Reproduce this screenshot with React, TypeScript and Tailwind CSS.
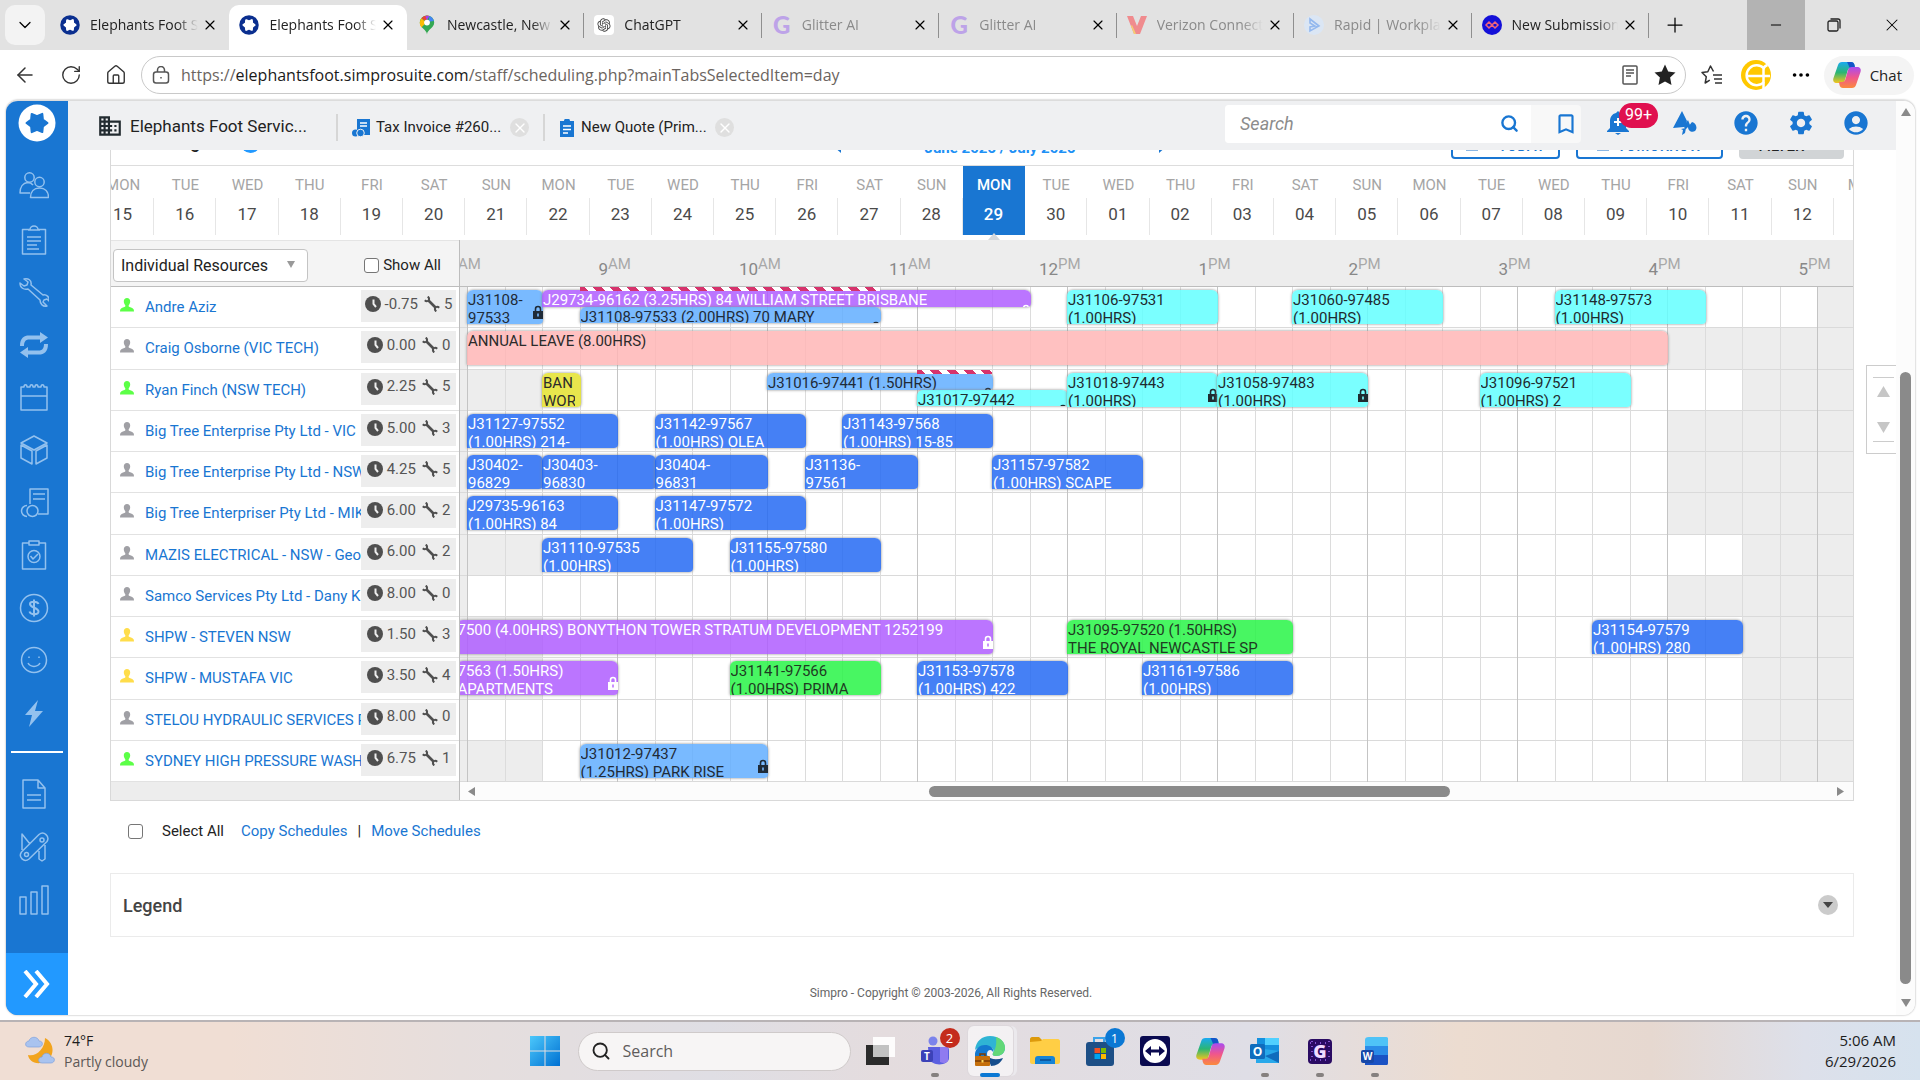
import React from 'react';
import clsx from 'clsx';
import { ArrowLeft, ChevronDown, House, Minus, MoreHorizontal, Plus, RotateCw, Search, X } from 'lucide-react';
import { MdAccountCircle, MdBookmarkBorder, MdBusiness, MdHelp, MdSettings } from 'react-icons/md';
import { RiOpenaiFill } from 'react-icons/ri';

const HOUR_WIDTH = 150;
const DAY_START = 8;

const timeToX = (hour: number) => 7 + (hour - DAY_START) * HOUR_WIDTH;

type Tone = 'sky' | 'purple' | 'cyan' | 'pink' | 'yellow' | 'blue' | 'green';

interface Job {
  start: number;
  end: number;
  tone: Tone;
  lines: string[];
  locked?: boolean;
  slot?: 'top' | 'bottom';
}

interface Resource {
  name: string;
  status: 'green' | 'grey' | 'yellow';
  hours: string;
  jobs: string;
  from: number;
  to: number;
  clash?: [number, number];
  blocks: Job[];
}

const tones: Record<Tone, string> = {
  sky: 'bg-[#62aeff]/85 text-[#1f2b38]',
  purple: 'bg-[#af5dff]/85 text-white',
  cyan: 'bg-[#62ffff]/85 text-[#1f2b30]',
  pink: 'bg-[#ffb6b6]/85 text-[#2b2b2b]',
  yellow: 'bg-[#e4e22e]/85 text-[#2b2b2b]',
  blue: 'bg-[#256af3]/85 text-white',
  green: 'bg-[#28f446]/85 text-[#1f3b22]',
};

const statusColors = {
  green: 'text-[#5cff47]',
  grey: 'text-[#a0a0a5]',
  yellow: 'text-[#ffdd4a]',
};

const resources: Resource[] = [
  {
    name: 'Andre Aziz', status: 'green', hours: '-0.75', jobs: '5', from: 8, to: 17, clash: [8.75, 10.75],
    blocks: [
      { start: 8, end: 8.5, tone: 'sky', lines: ['J31108-', '97533'], locked: true },
      { start: 8.5, end: 11.75, tone: 'purple', lines: ['J29734-96162 (3.25HRS) 84 WILLIAM STREET BRISBANE'], slot: 'top', locked: true },
      { start: 8.75, end: 10.75, tone: 'sky', lines: ['J31108-97533 (2.00HRS) 70 MARY'], slot: 'bottom', locked: true },
      { start: 12, end: 13, tone: 'cyan', lines: ['J31106-97531', '(1.00HRS)'] },
      { start: 13.5, end: 14.5, tone: 'cyan', lines: ['J31060-97485', '(1.00HRS)'] },
      { start: 15.25, end: 16.25, tone: 'cyan', lines: ['J31148-97573', '(1.00HRS)'] },
    ],
  },
  {
    name: 'Craig Osborne (VIC TECH)', status: 'grey', hours: '0.00', jobs: '0', from: 8, to: 16,
    blocks: [{ start: 8, end: 16, tone: 'pink', lines: ['ANNUAL LEAVE (8.00HRS)'] }],
  },
  {
    name: 'Ryan Finch (NSW TECH)', status: 'green', hours: '2.25', jobs: '5', from: 8.5, to: 16.5, clash: [11, 11.5],
    blocks: [
      { start: 8.5, end: 8.75, tone: 'yellow', lines: ['BAN', 'WOR'] },
      { start: 10, end: 11.5, tone: 'sky', lines: ['J31016-97441 (1.50HRS)'], slot: 'top', locked: true },
      { start: 11, end: 12, tone: 'cyan', lines: ['J31017-97442'], slot: 'bottom', locked: true },
      { start: 12, end: 13, tone: 'cyan', lines: ['J31018-97443', '(1.00HRS)'], locked: true },
      { start: 13, end: 14, tone: 'cyan', lines: ['J31058-97483', '(1.00HRS)'], locked: true },
      { start: 14.75, end: 15.75, tone: 'cyan', lines: ['J31096-97521', '(1.00HRS) 2'] },
    ],
  },
  {
    name: 'Big Tree Enterprise Pty Ltd - VIC', status: 'grey', hours: '5.00', jobs: '3', from: 8, to: 16,
    blocks: [
      { start: 8, end: 9, tone: 'blue', lines: ['J31127-97552', '(1.00HRS) 214-'] },
      { start: 9.25, end: 10.25, tone: 'blue', lines: ['J31142-97567', '(1.00HRS) OLEA'] },
      { start: 10.5, end: 11.5, tone: 'blue', lines: ['J31143-97568', '(1.00HRS) 15-85'] },
    ],
  },
  {
    name: 'Big Tree Enterprise Pty Ltd - NSW', status: 'grey', hours: '4.25', jobs: '5', from: 8, to: 16,
    blocks: [
      { start: 8, end: 8.5, tone: 'blue', lines: ['J30402-', '96829'] },
      { start: 8.5, end: 9.25, tone: 'blue', lines: ['J30403-', '96830'] },
      { start: 9.25, end: 10, tone: 'blue', lines: ['J30404-', '96831'] },
      { start: 10.25, end: 11, tone: 'blue', lines: ['J31136-', '97561'] },
      { start: 11.5, end: 12.5, tone: 'blue', lines: ['J31157-97582', '(1.00HRS) SCAPE'] },
    ],
  },
  {
    name: 'Big Tree Enterpriser Pty Ltd - MIK', status: 'grey', hours: '6.00', jobs: '2', from: 8, to: 16,
    blocks: [
      { start: 8, end: 9, tone: 'blue', lines: ['J29735-96163', '(1.00HRS) 84'] },
      { start: 9.25, end: 10.25, tone: 'blue', lines: ['J31147-97572', '(1.00HRS)'] },
    ],
  },
  {
    name: 'MAZIS ELECTRICAL - NSW - Geo', status: 'grey', hours: '6.00', jobs: '2', from: 8.5, to: 16.5,
    blocks: [
      { start: 8.5, end: 9.5, tone: 'blue', lines: ['J31110-97535', '(1.00HRS)'] },
      { start: 9.75, end: 10.75, tone: 'blue', lines: ['J31155-97580', '(1.00HRS)'] },
    ],
  },
  { name: 'Samco Services Pty Ltd - Dany K', status: 'grey', hours: '8.00', jobs: '0', from: 8, to: 16, blocks: [] },
  {
    name: 'SHPW - STEVEN NSW', status: 'yellow', hours: '1.50', jobs: '3', from: 8.5, to: 16.5,
    blocks: [
      { start: 7.93, end: 11.5, tone: 'purple', lines: ['7500 (4.00HRS) BONYTHON TOWER STRATUM DEVELOPMENT 1252199'], locked: true },
      { start: 12, end: 13.5, tone: 'green', lines: ['J31095-97520 (1.50HRS)', 'THE ROYAL NEWCASTLE SP'] },
      { start: 15.5, end: 16.5, tone: 'blue', lines: ['J31154-97579', '(1.00HRS) 280'] },
    ],
  },
  {
    name: 'SHPW - MUSTAFA VIC', status: 'yellow', hours: '3.50', jobs: '4', from: 8.5, to: 16.5,
    blocks: [
      { start: 7.93, end: 9, tone: 'purple', lines: ['7563 (1.50HRS)', 'APARTMENTS'], locked: true },
      { start: 9.75, end: 10.75, tone: 'green', lines: ['J31141-97566', '(1.00HRS) PRIMA'] },
      { start: 11, end: 12, tone: 'blue', lines: ['J31153-97578', '(1.00HRS) 422'] },
      { start: 12.5, end: 13.5, tone: 'blue', lines: ['J31161-97586', '(1.00HRS)'] },
    ],
  },
  { name: 'STELOU HYDRAULIC SERVICES P', status: 'grey', hours: '8.00', jobs: '0', from: 8, to: 16.5, blocks: [] },
  {
    name: 'SYDNEY HIGH PRESSURE WASH', status: 'green', hours: '6.75', jobs: '1', from: 8.5, to: 16.5,
    blocks: [{ start: 8.75, end: 10, tone: 'sky', lines: ['J31012-97437', '(1.25HRS) PARK RISE'], locked: true }],
  },
];

const weekdays = ['MON', 'TUE', 'WED', 'THU', 'FRI', 'SAT', 'SUN'];
const days = Array.from({ length: 29 }, (_, i) => ({
  name: weekdays[i % 7],
  date: i < 16 ? String(15 + i) : String(i - 15).padStart(2, '0'),
  active: i === 14,
}));

const hourLabels = ['8AM', '9AM', '10AM', '11AM', '12PM', '1PM', '2PM', '3PM', '4PM', '5PM'];

/* ---------- icons ---------- */

const STAR_PATH = 'M29.500 19l-4.600 3.400-.6 5.700-5.300-2.300-5.300 2.300-.6-5.700L8.500 19l4.600-3.400.6-5.700 5.300 2.300 5.300-2.300.6 5.700z';

const SimproMark = ({ className }: { className?: string }) => (
  <svg viewBox="0 0 38 38" className={className}>
    <circle cx="19" cy="19" r="18.500" fill="currentColor" />
    <path fill="#fff" stroke="#fff" strokeWidth="4" strokeLinejoin="round" d={STAR_PATH} />
  </svg>
);

const MapPinIcon = () => (
  <svg viewBox="0 0 20 24" className="h-[22px] w-4">
    <path fill="#34a853" d="M10 24C10 18 1 16 1 9a9 9 0 0118 0c0 7-9 9-9 15z" />
    <path fill="#ea4335" d="M3 3.500A9 9 0 0113 .6L8 7z" />
    <path fill="#4285f4" d="M13 .6A9 9 0 0118.600 7L12 8z" />
    <path fill="#a142f4" d="M8 1a9 9 0 015-.4L10 6z" />
    <path fill="#fbbc04" d="M1 9a9 9 0 012-5.500L9 9l-6 6C1.500 13 1 11 1 9z" />
    <circle cx="10" cy="9" r="3.600" fill="#fff" />
  </svg>
);

const VerizonIcon = () => (
  <svg viewBox="0 0 20 20" className="h-5 w-5">
    <path fill="#f08b8e" d="M0 1h6l4 10 4-10h6l-7 18H7z" />
    <path fill="#f5cf72" d="M5 10l4 9H7L4 11z" />
  </svg>
);

const RapidIcon = () => (
  <svg viewBox="0 0 20 20" className="h-5 w-5">
    <circle cx="10" cy="10" r="10" fill="#dbe6f4" />
    <path fill="none" stroke="#93b8ee" strokeWidth="1.600" d="M6 4l9 7-9 5v-4l5-1-5-3z" />
  </svg>
);

const LoopIcon = () => (
  <svg viewBox="0 0 20 20" className="h-5 w-5">
    <circle cx="10" cy="10" r="10" fill="#1410d8" />
    <g fill="none" stroke="#f0657a" strokeWidth="1.500">
      <path d="M10 10l-3-3-3 3 3 3zM16 10l-3-3-3 3 3 3z" />
    </g>
  </svg>
);

const GlitterIcon = () => <span className="font-[Lato] text-[24px] font-black leading-5 text-[#bda3e8]">G</span>;

const CopilotIcon = ({ className }: { className?: string }) => (
  <svg viewBox="0 0 30 30" className={className}>
    <defs>
      <linearGradient id="cp1" x1="0" y1="0" x2="0" y2="1">
        <stop offset="0" stopColor="#1aa9f2" />
        <stop offset=".5" stopColor="#2bb673" />
        <stop offset="1" stopColor="#f5c51d" />
      </linearGradient>
      <linearGradient id="cp2" x1="0" y1="0" x2="0" y2="1">
        <stop offset="0" stopColor="#a94cf0" />
        <stop offset=".5" stopColor="#f0568c" />
        <stop offset="1" stopColor="#fb8a3c" />
      </linearGradient>
    </defs>
    <path fill="url(#cp1)" d="M10 2h9c2 0 3 1 3.500 3L23 8h-4c-2 0-3 1-3.500 3L13 20c-.6 2-1.500 3-4 3H5c-3 0-4.500-2-3.500-5L6 5c.6-2 2-3 4-3z" />
    <path fill="#1454c8" d="M15 2h4c2 0 3 1 3.500 3L23 8h-4c-1.500 0-2-1-2.500-3z" />
    <path fill="url(#cp2)" d="M20 28h-9c-2 0-3-1-3.500-3L7 22h3c2 0 3-1 3.500-3L16 10c.6-2 1.500-3 4-3h5c3 0 4.500 2 3.500 5L24 25c-.6 2-2 3-4 3z" />
  </svg>
);

const LockIcon = () => (
  <svg viewBox="0 0 10 14" className="h-[14px] w-[10px]">
    <path fill="none" stroke="currentColor" strokeWidth="1.600" d="M2.500 7V4a2.500 2.500 0 015 0v3" />
    <path fill="currentColor" fillRule="evenodd" d="M0 6h10v8H0zM4.200 8.500v3h1.600v-3z" />
  </svg>
);

const PersonIcon = ({ className }: { className?: string }) => (
  <svg viewBox="0 0 14 14" className={className}>
    <path
      fill="currentColor"
      d="M7 0c2 0 3.200 1.300 3.200 3.300 0 1.600-.7 3-1.500 3.900v1.300c.6.900 4.100 1.200 4.900 2.700.3.700.4 1.600.4 2.300H0c0-.7.100-1.600.4-2.300.8-1.500 4.300-1.800 4.900-2.700V7.200C4.500 6.300 3.800 4.900 3.800 3.300 3.800 1.300 5 0 7 0z"
    />
  </svg>
);

const ClockIcon = () => (
  <svg viewBox="0 0 16 16" className="size-4">
    <circle cx="8" cy="8" r="8" fill="#4f4f4f" />
    <path fill="none" stroke="#eee" strokeWidth="2" d="M8.500 3.500V8l2.500 3" />
  </svg>
);

const SpannerIcon = () => (
  <svg viewBox="0 0 16 16" className="size-4" fill="none" stroke="#4f4f4f">
    <path strokeWidth="2.600" d="M4.500 4.500l7 7" />
    <path strokeWidth="2" d="M.8 4.200c1.600 1.600 3.700 1 4.100-.4.500-1.400-.2-2.500-1.200-3.200M15.200 11.800c-1.600-1.600-3.700-1-4.100.4-.5 1.400.2 2.500 1.200 3.200" />
  </svg>
);

const navIcons: { label: string; art: React.ReactNode }[] = [
  {
    label: 'People',
    art: (
      <>
        <circle cx="10.500" cy="5.500" r="4.700" />
        <circle cx="20.500" cy="10" r="4.700" />
        <path d="M11 21H1c0-6 3-10 7.500-10.500 2 0 4 .5 5.500 2.500M11.500 25.500c0-6 3.500-9.500 9-9.500s9 3.500 9 9.500z" />
      </>
    ),
  },
  { label: 'Quotes', art: <path d="M3.500 4.500H11a4 3.500 0 018 0h7.500v24.500h-23zM9 5h12M8 12h14M8 16h14M8 20h10M8 24h12" /> },
  {
    label: 'Jobs',
    art: (
      <path d="M1 6c0 5 4 7 8 6l12 11c0 4 3 7 7 6l-4-4 1-2 3-1 2 2c1-4-3-7-6-6L12 8c1-5-3-7-7-6l4 3-1 3-3 1z" />
    ),
  },
  {
    label: 'Recurring',
    art: (
      <path
        fill="currentColor"
        stroke="none"
        d="M1 16C1 8 5 5.500 10 5.500h11V2l8 5.500-8 5.500V9.500H10c-3 0-5 2-5 6.500zM29 14c0 8-4 10.500-9 10.500H9V28l-8-5.500L9 17v3.500h11c3 0 5-2 5-6.500z"
      />
    ),
  },
  { label: 'Schedules', art: <path d="M2 5h3c0-3 3-3 3 0h3c0-3 3-3 3 0h2c0-3 3-3 3 0h3c0-3 3-3 3 0h3v23H2zM2 14h26" /> },
  { label: 'Catalogue', art: <path d="M15 1l13 7-13 7L2 8zM2 10v13l11 6V16zM28 10v13l-11 6V16z" /> },
  {
    label: 'Invoices',
    art: (
      <>
        <path d="M11 16V1h18v25H19M14 6h12M14 11h12" />
        <circle cx="13.500" cy="23" r="5.500" />
        <path d="M8 17.500a5.500 5.500 0 100 11" />
      </>
    ),
  },
  {
    label: 'Tasks',
    art: (
      <>
        <path d="M10 3H3.500v26h23V3H20M10 1h10v4H10zM11.500 16l2.500 3 5-5" />
        <circle cx="15" cy="16.500" r="6" />
      </>
    ),
  },
  {
    label: 'Payments',
    art: (
      <>
        <circle cx="15" cy="15" r="13.500" />
        <path strokeWidth="2" d="M15 6.500v17M19.500 11c-1-3-8.500-3-8.500 0 0 4 8.500 3.500 8.500 7.500 0 3.500-8 3.500-9 0" />
      </>
    ),
  },
  {
    label: 'Customers',
    art: (
      <>
        <circle cx="15" cy="15" r="12.500" />
        <path d="M9 18c2.500 4.500 9.500 4.500 12 0M10 11.500v1.500M20 11.500v1.500" />
      </>
    ),
  },
  { label: 'Activity', art: <path fill="currentColor" stroke="none" d="M19 2L6 17h7l-3 12 14-16h-8z" /> },
];

const moreIcons: { label: string; art: React.ReactNode }[] = [
  { label: 'Documents', art: <path d="M4 1h15l7 8v20H4zM19 1v8h7M8 16h14M8 21h14" /> },
  {
    label: 'Utilities',
    art: (
      <>
        <path d="M2.500 20L20 2.500c5-4 11 2 8 7L10 27c-5 4-11-2-7.500-7zM3 18V2l8 10M20 19v8l3 2 3-2V13" />
        <circle cx="23" cy="8" r="2" />
        <circle cx="7.500" cy="22.500" r="2" />
      </>
    ),
  },
  { label: 'Reports', art: <path d="M1 12h6v17H1zM12 7h6v22h-6zM23 1h6v28h-6z" /> },
];

const NavButton = ({ label, art }: { label: string; art: React.ReactNode }) => (
  <button aria-label={label} className="grid w-full place-items-center pr-1.5 text-[#93c1ee]">
    <svg viewBox="0 0 30 30" className="size-[30px]" fill="none" stroke="currentColor" strokeWidth="1.500" strokeLinejoin="round">
      {art}
    </svg>
  </button>
);

/* ---------- browser ---------- */

const browserTabs = [
  { title: 'Elephants Foot Services', icon: <SimproMark className="size-5 text-[#0b2f8f]" /> },
  { title: 'Elephants Foot Services', icon: <SimproMark className="size-5 text-[#0b2f8f]" />, active: true },
  { title: 'Newcastle, New South', icon: <MapPinIcon /> },
  {
    title: 'ChatGPT',
    icon: (
      <span className="grid size-5 place-items-center rounded-sm bg-white">
        <RiOpenaiFill className="size-4 text-[#444]" />
      </span>
    ),
  },
  { title: 'Glitter AI', icon: <GlitterIcon />, dim: true },
  { title: 'Glitter AI', icon: <GlitterIcon />, dim: true },
  { title: 'Verizon Connect R', icon: <VerizonIcon />, dim: true },
  { title: 'Rapid | Workplace', icon: <RapidIcon />, dim: true },
  { title: 'New Submission', icon: <LoopIcon /> },
];

const TabStrip = () => (
  <div className="flex h-[50px] items-stretch bg-[#e2e2e2]">
    <button aria-label="Tab actions" className="my-[5px] ml-[5px] mr-[7px] grid w-10 place-items-center rounded-[10px] bg-[#f3f3f3]">
      <ChevronDown className="size-5" strokeWidth={1.5} />
    </button>
    <div className="grid shrink basis-[1597px] grid-cols-9">
      {browserTabs.map((tab, i) => (
        <div
          key={i}
          className={clsx(
            'flex min-w-0 items-center',
            i === 0 ? 'pl-2' : 'pl-[10px]',
            tab.active && 'mt-[5px] rounded-t-[10px] bg-white pb-[5px]',
          )}
        >
          <span className="flex w-5 shrink-0 justify-center">{tab.icon}</span>
          <span
            className={clsx(
              'ml-[10px] flex-1 overflow-hidden whitespace-nowrap text-[14px] leading-5 [mask-image:linear-gradient(to_right,#000_80%,transparent)]',
              tab.dim ? 'text-[#8a8a8a]' : 'text-[#222]',
            )}
          >
            {tab.title}
          </span>
          <button aria-label="Close tab" className="ml-1 mr-2.5 shrink-0">
            <X className="size-4" strokeWidth={1.75} />
          </button>
          <span className={clsx('h-[25px] w-px', i > 1 ? 'bg-[#8f8f8f]' : 'bg-transparent')} />
        </div>
      ))}
    </div>
    <button aria-label="New tab" className="ml-3 grid w-7 place-items-center">
      <Plus className="size-6" strokeWidth={1.25} />
    </button>
    <div className="ml-auto flex">
      <button aria-label="Minimize" className="grid w-[58px] place-items-center bg-[#b3b3b3]">
        <Minus className="size-4" strokeWidth={1.5} />
      </button>
      <button aria-label="Restore" className="grid w-[58px] place-items-center">
        <svg viewBox="0 0 14 14" className="size-3.5" fill="none" stroke="#222" strokeWidth="1.300">
          <rect x="1" y="3" width="10" height="10" rx="1.500" />
          <path d="M3.500 1H11a2 2 0 012 2v7.500" />
        </svg>
      </button>
      <button aria-label="Close" className="grid w-[57px] place-items-center">
        <X className="size-5" strokeWidth={1.25} />
      </button>
    </div>
  </div>
);

const AddressBar = () => (
  <div className="flex h-[50px] items-center bg-white">
    <div className="flex w-[141px] items-center gap-[23px] pl-[13px] text-[#333]">
      <button aria-label="Back"><ArrowLeft className="size-6" strokeWidth={1.5} /></button>
      <button aria-label="Reload"><RotateCw className="size-[22px]" strokeWidth={1.5} /></button>
      <button aria-label="Home"><House className="size-[22px]" strokeWidth={1.5} /></button>
    </div>
    <div className="flex h-[38px] flex-1 items-center rounded-full border border-[#c9c9c9] pl-2.5 pr-2">
      <svg viewBox="0 0 18 18" className="size-[18px]" fill="none" stroke="#555" strokeWidth="1.500">
        <rect x="1.500" y="6" width="15" height="11" rx="2.500" />
        <path d="M5.500 6V4a3.500 3.500 0 017 0v2M9 11v1.500" />
      </svg>
      <p className="ml-[11px] text-[16px] leading-6 text-[#6b6460]">
        https://<span className="text-[#1a1a1a]">elephantsfoot.simprosuite.com</span>/staff/scheduling.php?mainTabsSelectedItem=day
      </p>
      <button aria-label="Reader" className="ml-auto">
        <svg viewBox="0 0 16 20" className="h-5 w-4" fill="none" stroke="#555" strokeWidth="1.500">
          <rect x="1" y="1" width="14" height="18" rx="1" />
          <path d="M4 5h8M4 8h8M4 11h5" />
        </svg>
      </button>
      <button aria-label="Favourite" className="ml-[15px]">
        <svg viewBox="0 0 24 24" className="size-6" fill="#222">
          <path d="M12 1.500l3.200 7 7.300.9-5.400 5.200 1.400 7.500L12 18.400l-6.500 3.700 1.400-7.500L1.500 9.400l7.300-.9z" />
        </svg>
      </button>
    </div>
    <button aria-label="Favourites list" className="ml-[15px]">
      <svg viewBox="0 0 22 20" className="h-5 w-[22px]" fill="none" stroke="#333" strokeWidth="1.500" strokeLinejoin="round">
        <path d="M12.500 6.500L9.500 1 6.800 6.800 1 7.500l4.300 4.200L4.200 18l4.600-2.800M12 10h9M13 14h8M14 18h7" />
      </svg>
    </button>
    <button aria-label="Extension" className="ml-[18px]">
      <svg viewBox="0 0 30 30" className="size-[30px]">
        <circle cx="15" cy="15" r="15" fill="#ffc800" />
        <g fill="none" stroke="#fff" strokeWidth="2.500">
          <path d="M23 8.500A10 10 0 1023 22M5 16h24" />
          <path d="M22.500 29V10c0-3 1-4 4-5" />
        </g>
      </svg>
    </button>
    <button aria-label="More" className="ml-[19px]"><MoreHorizontal className="size-[22px]" /></button>
    <button className="ml-3 mr-[6px] flex h-[39px] items-center gap-2 rounded-full bg-[#f4f4f4] px-2 pr-3 text-[15px] text-[#222]">
      <CopilotIcon className="size-[30px]" />
      Chat
    </button>
  </div>
);

/* ---------- app chrome ---------- */

const Sidebar = () => (
  <aside className="flex w-[62px] shrink-0 flex-col bg-[#1976d2]">
    <div className="flex h-[60px] justify-center pt-[3px]">
      <svg viewBox="0 0 38 38" className="size-[38px]">
        <circle cx="19" cy="19" r="18.500" fill="#fff" />
        <path fill="#1976d2" stroke="#1976d2" strokeWidth="2" strokeLinejoin="round" d={STAR_PATH} />
      </svg>
    </div>
    <nav className="grid h-[578px] grid-rows-11">
      {navIcons.map((item) => <NavButton key={item.label} {...item} />)}
    </nav>
    <hr className="mx-[5px] mt-3 border-t-2 border-white" />
    <nav className="mt-[15px] grid h-[158px] grid-rows-3">
      {moreIcons.map((item) => <NavButton key={item.label} {...item} />)}
    </nav>
    <button aria-label="Expand menu" className="mt-auto grid h-[62px] place-items-center bg-[#2299ff]">
      <svg viewBox="0 0 28 28" className="size-[28px]" fill="none" stroke="#fff" strokeWidth="4">
        <path d="M2 1l11 13L2 27M13 1l11 13-11 13" />
      </svg>
    </button>
  </aside>
);

const OpenTab = ({ icon, title }: { icon: React.ReactNode; title: string }) => (
  <div className="flex h-[27px] items-center border-l-2 border-[#d6d6d6] pl-3.5">
    {icon}
    <span className="ml-1.5 w-[122px] whitespace-nowrap text-[15px] text-[#222]">{title}</span>
    <button aria-label="Close" className="ml-3 mr-3.5 grid size-[19px] place-items-center rounded-full bg-[#dfdfdf] text-white">
      <X className="size-4" strokeWidth={2} />
    </button>
  </div>
);

const Header = () => (
  <header className="flex h-[49px] items-center bg-[#eff0f2]">
    <MdBusiness className="ml-[29px] size-[26px] text-[#222b30]" />
    <h1 className="ml-[7px] w-[206px] text-[17px] leading-6 text-[#222]">Elephants Foot Servic...</h1>
    <div className="mt-1 flex">
      <OpenTab
        title="Tax Invoice #260..."
        icon={
          <svg viewBox="0 0 18 18" className="size-[18px]">
            <path fill="#1976d2" d="M5 0h13v16H5z" />
            <path stroke="#fff" strokeWidth="1.300" d="M8 4h7M8 7h7" />
            <circle cx="3.500" cy="14" r="3.500" fill="#1976d2" />
            <circle cx="8.500" cy="14" r="3.800" fill="#1976d2" stroke="#eff0f2" />
          </svg>
        }
      />
      <OpenTab
        title="New Quote (Prim..."
        icon={
          <svg viewBox="0 0 16 18" className="h-[18px] w-4">
            <path fill="#1976d2" d="M1 2h4a3 2.500 0 016 0h4v16H1z" />
            <path stroke="#fff" strokeWidth="1.500" d="M4 7h8M4 10.500h8M4 14h5" />
          </svg>
        }
      />
    </div>
    <div className="mb-1 ml-auto flex h-[38px] rounded bg-[#f8f8f8]">
      <label className="flex w-[306px] items-center rounded-l bg-white pl-[15px] pr-3">
        <input
          aria-label="Search"
          placeholder="Search"
          className="min-w-0 flex-1 text-[18px] italic outline-none placeholder:italic placeholder:text-[#8c8c8c]"
        />
        <Search className="size-[19px] text-[#1976d2]" strokeWidth={3} />
      </label>
      <button aria-label="Bookmarks" className="grid w-[50px] place-items-center pl-5 text-[#1976d2]">
        <MdBookmarkBorder className="size-[26px]" />
      </button>
    </div>
    <div className="mb-1.5 flex items-center text-[#1976d2]">
      <button aria-label="Notifications" className="relative ml-[26px]">
        <svg viewBox="0 0 22 24" className="h-6 w-[22px]" fill="currentColor">
          <path d="M11 0l2 2c4 1 6 4 6 8v7l3 3v1H0v-1l3-3v-7c0-4 2-7 6-8zM8 22h6l-3 2z" />
          <path stroke="#fff" strokeWidth="2" d="M11 7v8M7 11h8" />
        </svg>
        <span className="absolute -top-2 left-3 flex h-[25px] items-center rounded-full bg-[#e0104f] px-1.5 text-[16px] text-white">99+</span>
      </button>
      <button aria-label="Announcements" className="ml-[44px]">
        <svg viewBox="0 0 24 24" className="size-6" fill="currentColor">
          <path d="M9 0l5 10-3 6-11 1zM15 9l2 5-5 5-1-4zM8 18l5-1-1 5-3 2 1-5zM19 11c4 1 6 6 3 9-3 2-7 0-7-4z" />
        </svg>
      </button>
      <button aria-label="Help" className="ml-[35px]"><MdHelp className="size-[28px]" /></button>
      <button aria-label="Settings" className="ml-[27px]"><MdSettings className="size-[28px]" /></button>
      <button aria-label="Account" className="ml-[27px] mr-[26px]"><MdAccountCircle className="size-[28px]" /></button>
    </div>
  </header>
);

/* ---------- schedule ---------- */

// Scrolled mostly out of view underneath the header
const PeriodBar = () => (
  <div className="relative flex h-[15px] items-end overflow-hidden">
    <h2 className="mb-3 w-[130px] whitespace-nowrap text-[18px] font-medium leading-[22px] text-[#222]">Scheduling</h2>
    <span className="mb-3 size-[19px] shrink-0 rounded-full bg-[#2299ff]" />
    <div className="flex flex-1 items-end justify-center gap-[84px] pl-[304px] pr-[15px] text-[#2090f5]">
      <svg viewBox="0 0 8 14" className="mb-3 h-3.5 w-2" fill="#1976d2"><path d="M8 0v14L0 7z" /></svg>
      <span className="mb-1 whitespace-nowrap text-[15px] font-bold leading-[26px]">June 2026 / July 2026</span>
      <svg viewBox="0 0 8 14" className="mb-3 h-3.5 w-2" fill="#1976d2"><path d="M0 0v14l8-7z" /></svg>
    </div>
    <div className="mb-1.5 flex gap-4 pr-[9px] text-[15px] leading-[21px]">
      <button className="w-[109px] rounded border-2 border-[#1976d2] pt-1.5 font-medium text-[#1976d2]">
        <span className="mr-5 inline-block h-2.5 w-3 bg-[#8ab6e4]" />TODAY
      </button>
      <button className="w-[147px] rounded border-2 border-[#1976d2] pt-1.5 font-medium text-[#1976d2]">
        <span className="mr-2 inline-block h-2.5 w-3 bg-[#8ab6e4]" />TOMORROW
      </button>
      <button className="w-[105px] rounded bg-[#d1d4d6] pb-0.5 pr-5 pt-2 font-medium text-[#222]">FILTER</button>
    </div>
  </div>
);

const DayStrip = () => (
  <div className="overflow-hidden border-t border-[#ddd]">
    <div className="-ml-[19px] -mr-[43px] grid h-[74px] grid-cols-29">
      {days.map((day, i) => (
        <button key={i} className={clsx('relative h-[69px] text-center', day.active ? 'bg-[#1976d2] font-medium text-white' : 'text-[#4a4a4a]')}>
          <span className={clsx('block pt-[7px] text-[15px] leading-[22px]', !day.active && 'text-[#a5a5a5]')}>{day.name}</span>
          <span className={clsx('mt-0.5 block h-[37px] border-r text-[17px] leading-[33px]', day.active ? 'border-transparent' : 'border-[#e6e6e6]')}>
            {day.date}
          </span>
        </button>
      ))}
    </div>
  </div>
);

const ResourceList = () => (
  <div className="w-[349px] shrink-0 border-r border-[#bdbdbd] bg-white">
    <div className="flex h-[47px] items-center border-y border-b-[#bdbdbd] border-t-[#e4e4e4] bg-[#f4f4f4] pl-0.5 pt-1">
      <div className="relative">
        <select
          aria-label="Resource view"
          className="h-[33px] w-[195px] appearance-none rounded border border-[#c4c4c4] bg-white pl-[7px] text-[16px] text-[#222]"
        >
          <option>Individual Resources</option>
        </select>
        <svg viewBox="0 0 8 7" className="absolute right-[13px] top-3 h-[7px] w-2" fill="#999"><path d="M0 0h8L4 7z" /></svg>
      </div>
      <label className="ml-auto mr-[18px] flex items-center gap-1 text-[15px] text-[#222]">
        <input type="checkbox" className="size-[15px] appearance-none rounded-[3px] border border-[#767676] bg-white" />
        Show All
      </label>
    </div>
    <ul className="grid h-[495px] grid-rows-12">
      {resources.map((r) => (
        <li key={r.name} className="flex min-w-0 border-b border-[#e2e2e2] pl-[9px] pr-[3px]">
          <PersonIcon className={clsx('mt-[11px] size-3.5 shrink-0', statusColors[r.status])} />
          <a href="#" className="ml-[11px] flex-1 overflow-hidden whitespace-nowrap text-[15px] leading-[40px] text-[#1976d2]">
            {r.name}
          </a>
          <div className="mt-[3px] flex h-8 w-[95px] items-center justify-center gap-1 bg-[#ededed] pb-1 text-[15px] text-[#555]">
            <ClockIcon />
            <span>{r.hours}</span>
            <span className="ml-0.5 flex items-center gap-1"><SpannerIcon />{r.jobs}</span>
          </div>
        </li>
      ))}
    </ul>
    <div className="h-[18px] bg-[#ededed]" />
  </div>
);

const JobBlock = ({ job }: { job: Job }) => {
  const left = timeToX(job.start);
  return (
    <div
      className={clsx(
        'absolute z-20 overflow-hidden rounded-t-md rounded-br-sm pl-px pr-1.5 pt-px text-[15px] leading-[18px] shadow-[0_0_3px_#888]',
        tones[job.tone],
        job.slot === 'bottom' ? 'top-5 h-4' : 'top-[3px]',
        job.slot === 'top' && 'h-[17px]',
        !job.slot && 'h-[34px]',
      )}
      style={{ left, width: timeToX(job.end) - left + 1 }}
    >
      {job.lines.map((line) => <div key={line} className="overflow-hidden whitespace-nowrap">{line}</div>)}
      {job.locked && <span className={clsx('absolute right-0', job.slot ? 'top-3.5' : 'top-[15px]')}><LockIcon /></span>}
    </div>
  );
};

const Timeline = () => (
  <div className="min-w-0 flex-1 overflow-hidden">
    <div className="flex h-[47px] border-b border-[#bdbdbd] bg-[#ededed]">
      <div className="-ml-[32px] flex">
        {hourLabels.map((label) => (
          <div key={label} className="flex w-[150px] shrink-0 pt-3">
            <span className="w-[30px] text-right text-[17px] leading-[35px] text-[#888]">{label.slice(0, -2)}</span>
            <span className="text-[15px] leading-6 text-[#a8a8a8]">{label.slice(-2)}</span>
          </div>
        ))}
      </div>
    </div>
    <div className="relative isolate grid h-[495px] grid-rows-12 overflow-hidden bg-white">
      {resources.map((r) => (
        <div key={r.name} className="relative border-b border-[#dadada]">
          <div className="absolute inset-y-0 left-0 bg-[#ededed]" style={{ width: timeToX(r.from) }} />
          <div className="absolute inset-y-0 right-0 bg-[#ededed]" style={{ left: timeToX(r.to) }} />
          {r.blocks.map((job) => <JobBlock key={job.lines[0]} job={job} />)}
          {r.clash && (
            <div
              className="absolute top-0 z-30 h-1 bg-[repeating-linear-gradient(45deg,#d6336c_0_6px,#ffffff_6px_12px)]"
              style={{ left: timeToX(r.clash[0]), width: timeToX(r.clash[1]) - timeToX(r.clash[0]) }}
            />
          )}
        </div>
      ))}
      {Array.from({ length: 37 }, (_, i) => (
        <div
          key={i}
          className={clsx('absolute inset-y-0 z-10 w-px', i % 4 === 0 ? 'bg-[#c4c4c4]' : 'bg-[#dcdcdc]')}
          style={{ left: Math.round(timeToX(DAY_START + i / 4)) }}
        />
      ))}
    </div>
    <div className="flex h-[18px] items-center justify-between bg-[#fcfcfc] pl-2 pr-[9px]">
      <svg viewBox="0 0 7 9" className="h-[9px] w-[7px]" fill="#8a8a8a"><path d="M7 0v9L0 4.500z" /></svg>
      <div className="ml-[66px] h-[11px] w-[521px] rounded-full bg-[#8a8a8a]" />
      <svg viewBox="0 0 7 9" className="h-[9px] w-[7px]" fill="#8a8a8a"><path d="M0 0v9l7-4.500z" /></svg>
    </div>
  </div>
);

const Schedule = () => (
  <div className="flex flex-1 flex-col bg-white">
    <div className="flex">
      <section className="ml-[42px] min-w-0 flex-1 border-x border-b border-[#d9d9d9]">
        <PeriodBar />
        <DayStrip />
        <div className="relative flex">
          <svg viewBox="0 0 12 7" className="absolute -top-[7px] left-[877px] h-[7px] w-3" fill="#d5d8dc"><path d="M6 0l6 7H0z" /></svg>
          <ResourceList />
          <Timeline />
        </div>
      </section>
      <div className="w-[42px] shrink-0 pl-3">
        <div className="mt-[215px] flex h-[89px] flex-col items-center justify-between border-y border-l border-[#ccc] py-[11px] pl-1">
          <button aria-label="Previous" className="border-t border-[#ccc] px-1 pt-2">
            <svg viewBox="0 0 13 11" className="h-[11px] w-[13px]" fill="#c6c6c6"><path d="M6.500 0L13 11H0z" /></svg>
          </button>
          <button aria-label="Next" className="border-b border-[#ccc] px-1 pb-2">
            <svg viewBox="0 0 13 11" className="h-[11px] w-[13px]" fill="#c6c6c6"><path d="M6.500 11L0 0h13z" /></svg>
          </button>
        </div>
      </div>
    </div>
    <div className="ml-[60px] mt-[18px] flex h-6 items-center text-[15px] text-[#222]">
      <input id="select-all" type="checkbox" className="size-[15px] appearance-none rounded-[3px] border border-[#767676] bg-white" />
      <label htmlFor="select-all" className="ml-[19px]">Select All</label>
      <a href="#" className="ml-[17px] text-[#1976d2]">Copy Schedules</a>
      <span className="mx-[10px]">|</span>
      <a href="#" className="text-[#1976d2]">Move Schedules</a>
    </div>
    <section className="ml-[42px] mr-[42px] mt-[30px] flex h-[64px] items-center justify-between border border-[#ebebeb] pl-3 pr-[15px]">
      <h2 className="text-[18px] font-medium text-[#444]">Legend</h2>
      <button aria-label="Expand legend" className="grid size-5 place-items-center rounded-full bg-[#cbcbcb]">
        <svg viewBox="0 0 10 6" className="h-1.5 w-2.5" fill="#444"><path d="M0 0h10L5 6z" /></svg>
      </button>
    </section>
    <footer className="mt-12 pr-[62px] text-center text-[12px] leading-4 text-[#666]">
      Simpro - Copyright © 2003-2026, All Rights Reserved.
    </footer>
  </div>
);

const PageScrollbar = () => (
  <div className="flex w-[19px] shrink-0 flex-col items-center bg-[#fcfcfc]">
    <svg viewBox="0 0 10 8" className="mt-[7px] h-2 w-2.5" fill="#8a8a8a"><path d="M5 0l5 8H0z" /></svg>
    <div className="mt-auto h-[612px] w-[11px] rounded-full bg-[#8a8a8a]" />
    <svg viewBox="0 0 10 8" className="mb-2 mt-[15px] h-2 w-2.5" fill="#8a8a8a"><path d="M5 8L0 0h10z" /></svg>
  </div>
);

/* ---------- taskbar ---------- */

const TaskIcon = ({ label, running, badge, badgeColor, active, children }: {
  label: string;
  running?: boolean;
  badge?: string;
  badgeColor?: string;
  active?: boolean;
  children: React.ReactNode;
}) => (
  <button
    aria-label={label}
    className={clsx('relative grid h-[50px] w-[45px] place-items-center rounded-md', active && 'bg-white/60 shadow-[0_0_0_1px_#ddd8dc,4px_0_0_#ebe9ed]')}
  >
    <svg viewBox="0 0 30 30" className="size-[30px]">{children}</svg>
    {badge && (
      <span className={clsx('absolute -right-0.5 top-0.5 grid size-5 place-items-center rounded-full text-[13px] leading-none text-white', badgeColor)}>
        {badge}
      </span>
    )}
    {running && <span className={clsx('absolute -bottom-px h-1 rounded-full', active ? 'w-5 bg-[#0b78d4]' : 'w-2 bg-[#85807f]')} />}
  </button>
);

const Taskbar = () => (
  <footer className="flex h-[60px] items-center border-t-2 border-[#b8b3b5] bg-[linear-gradient(to_right,#f0ded4_0%,#f0ded4_12%,#e6dedd_24%,#dfdee4_37%,#e4dcde_46%,#dfdee6_65%,#ecdcd0_76%,#e6d8d0_86%,#dde0ea_94%,#d6e2ee_100%)] text-[14px] leading-[21px]">
    <div className="flex flex-1 items-center pl-[25px]">
      <svg viewBox="0 0 30 30" className="size-[30px]">
        <path fill="#f2a41d" d="M20 2c12 6 9 24-4 25C8 28 4 24 3 19c8 2 17-6 17-17z" />
        <path fill="#a9c3ef" stroke="#7fa2dd" strokeWidth=".7" d="M4 11c-5 0-4-6 0-6 1-5 9-5 10 0 5 0 4 6 0 6zM17 27c-5 0-4-6 0-6 1-5 8-5 9 0 5 0 4 6 0 6z" />
      </svg>
      <div className="ml-[9px]">
        <p className="text-[#1c1c1c]">74°F</p>
        <p className="text-[#5c5856]">Partly cloudy</p>
      </div>
    </div>
    <div className="flex items-center pl-1.5">
      <button aria-label="Start">
        <svg viewBox="0 0 30 30" className="size-[30px]">
          <defs>
            <linearGradient id="win" x1="0" y1="0" x2="1" y2="1">
              <stop offset="0" stopColor="#4cc8fb" />
              <stop offset="1" stopColor="#0070d2" />
            </linearGradient>
          </defs>
          <path fill="url(#win)" d="M0 0h14.500v14.500H0zM15.500 0H30v14.500H15.500zM0 15.500h14.500V30H0zM15.500 15.500H30V30H15.500z" />
        </svg>
      </button>
      <label className="ml-[18px] mr-[7px] flex h-[39px] w-[273px] items-center rounded-full border border-[#cfcaca] bg-[#f7f5f5] pl-3">
        <Search className="size-5 text-[#222]" strokeWidth={2.25} />
        <input aria-label="Search Windows" placeholder="Search" className="ml-3 min-w-0 flex-1 text-[16px] outline-none placeholder:text-[#5f5c5c]" />
      </label>
      <div className="flex gap-[10px]">
        <TaskIcon label="Task view">
          <path fill="#2b2b2b" d="M1 9h23v20H1z" />
          <path fill="#fff" fillOpacity=".9" d="M8 1h22v20H8z" />
          <path fill="#c2c2c2" d="M8 9h16v12H8z" />
        </TaskIcon>
        <TaskIcon label="Teams" running badge="2" badgeColor="bg-[#c42b1c]">
          <circle cx="13" cy="5" r="4.500" fill="#7b83eb" />
          <path fill="#5b5fe0" d="M8 11h18c3 0 3 2 3 5v6c0 8-18 9-20 0z" />
          <path fill="#8f7bf0" d="M20 11h8v14c-3 3-5 2-8 1z" />
          <rect x="1" y="14" width="12" height="12" rx="2" fill="#3c42b8" />
          <text x="7" y="24" textAnchor="middle" fontSize="10" fontWeight="700" fill="#fff">T</text>
        </TaskIcon>
        <TaskIcon label="Edge" running active>
          <path fill="#2fb4d4" d="M0 14C1 5 7 0 15 0c9 0 15 6 15 12 0 5-4 8-9 8-3 0-4-1-3-3 2-4-2-7-8-7-5 0-9 3-10 4z" />
          <path fill="#62d878" d="M21 1c6 2 9 6 9 11 0 5-4 8-9 8-3 0-4-1-3-3 2-3 4-8 3-16z" />
          <path fill="#1479cf" d="M0 21c-1-7 4-12 10-12 5 0 9 3 8 7-1-3-6-3-6 2v3z" />
          <path fill="#154d8c" d="M12 19c3 5 10 5 16 3-2 5-7 8-12 8z" />
          <rect x="0" y="20" width="15" height="10" rx="1" fill="#c56f0c" />
          <path fill="none" stroke="#7a3c06" strokeWidth="1.500" d="M5 20v-2h5v2M0 25h15" />
          <path fill="#ffd75a" d="M6.500 24h2v2.500h-2z" />
        </TaskIcon>
        <TaskIcon label="File Explorer">
          <path fill="#dd9a0c" d="M0 3c0-1 1-2 2-2h7l4 4v5H0z" />
          <path fill="#ffce45" d="M0 6l11-1 2-2h15c1 0 2 1 2 2v21c0 1-1 2-2 2H2c-1 0-2-1-2-2z" />
          <path fill="#1784d6" d="M5 28v-5c0-2 1-3 3-3h14c2 0 3 1 3 3v5z" />
          <path stroke="#0b4f95" strokeWidth="1.600" d="M10 24h11" />
        </TaskIcon>
        <TaskIcon label="Microsoft Store" badge="1" badgeColor="bg-[#0b78d4]">
          <path fill="none" stroke="#3ba3ea" strokeWidth="2" d="M9 7V2h10v5" />
          <rect x="1" y="6" width="28" height="24" rx="3" fill="#1d4f86" />
          <path fill="#f25022" d="M9.500 12H15v5H9.500z" />
          <path fill="#7fba00" d="M16 12h5v5h-5z" />
          <path fill="#00a4ef" d="M9.500 18H15v5H9.500z" />
          <path fill="#ffb900" d="M16 18h5v5h-5z" />
        </TaskIcon>
        <TaskIcon label="TeamViewer">
          <rect width="30" height="30" rx="3" fill="#0a0a50" />
          <circle cx="15" cy="15" r="12" fill="#fff" />
          <path fill="#0a0a50" d="M5 15l6-5v3.500h8V10l6 5-6 5v-3.500h-8V20z" />
        </TaskIcon>
        <button aria-label="Copilot" className="grid h-[50px] w-[45px] place-items-center"><CopilotIcon className="size-[31px]" /></button>
        <TaskIcon label="Outlook" running>
          <path fill="#1490df" d="M7 2h22v14H7z" />
          <path fill="#50d0ff" d="M15 2h14v7H15z" />
          <path fill="#28a8ea" d="M6 12l23 3v12H6z" />
          <path fill="#0f6cbd" d="M29 15v12L15 20z" />
          <rect x="0" y="8" width="15" height="15" rx="1.500" fill="#0f6cbd" />
          <text x="7.500" y="20" textAnchor="middle" fontSize="12" fontWeight="700" fill="#fff">O</text>
        </TaskIcon>
        <TaskIcon label="Glitter AI" running>
          <rect x="3" y="3" width="24" height="25" rx="4" fill="#2a0b63" />
          <path stroke="#a06cf0" strokeWidth="1.500" strokeDasharray="1 4" d="M5 7h20M5 24h20M7 5v20M24 5v20" />
          <text x="15" y="22" textAnchor="middle" fontSize="18" fontWeight="800" fill="#f0dcff">G</text>
        </TaskIcon>
        <TaskIcon label="Word" running>
          <path fill="#4fc3f7" d="M9 1h17c2 0 2 1 2 2v8H5V4c0-2 1-3 4-3z" />
          <path fill="#2b8ce8" d="M5 10h23v10H5z" />
          <path fill="#1a52c4" d="M5 19h23v8c0 2-1 2-2 2H5z" />
          <rect x="1" y="14" width="13" height="13" rx="2" fill="#1748a8" />
          <text x="7.500" y="24" textAnchor="middle" fontSize="10" fontWeight="700" fill="#fff">W</text>
        </TaskIcon>
      </div>
    </div>
    <div className="flex-1 pr-6 text-right text-[15px] text-[#1c1c1c]">
      <p>5:06 AM</p>
      <p>6/29/2026</p>
    </div>
  </footer>
);

const App: React.FC = () => {
  return (
    <div className="flex min-h-screen flex-col bg-white font-['Open_Sans',sans-serif]">
      <TabStrip />
      <AddressBar />
      <div className="mb-[5px] ml-[6px] mr-[5px] flex flex-1 overflow-hidden rounded-xl border-t border-[#dcdcdc] font-[Roboto,sans-serif] shadow-[0_0_2px_#999]">
        <Sidebar />
        <main className="flex min-w-0 flex-1 flex-col">
          <Header />
          <Schedule />
        </main>
        <PageScrollbar />
      </div>
      <Taskbar />
    </div>
  );
};

export default App;
